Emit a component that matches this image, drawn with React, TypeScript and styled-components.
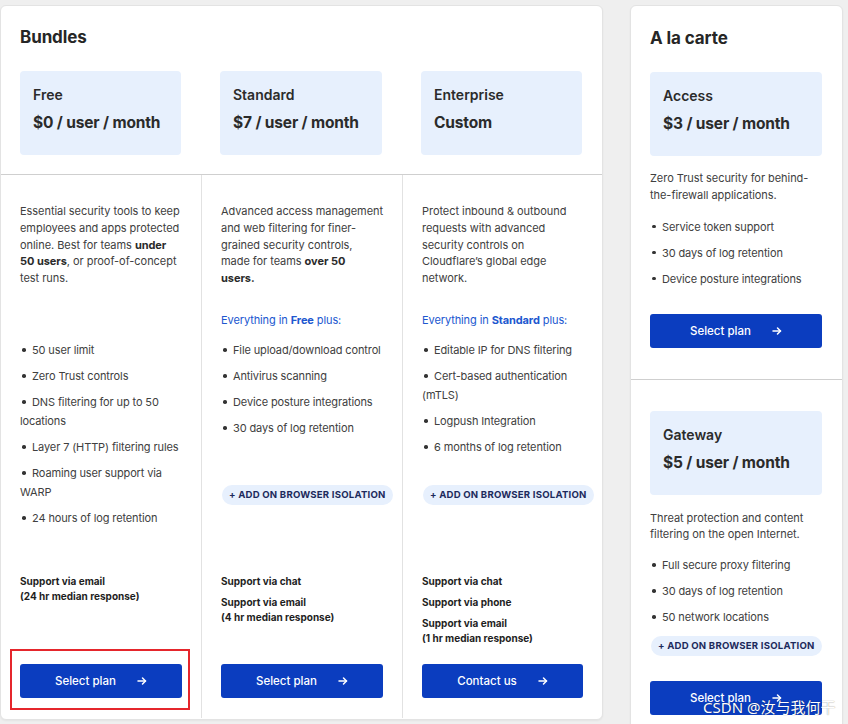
import React from 'react';
import styled, { createGlobalStyle } from 'styled-components';

const Global = createGlobalStyle`
  html, body { margin: 0; padding: 0; background: #efefef; }
  body { font-family: Inter, "Noto Sans", "Liberation Sans", sans-serif; color: #2a2a2a; }
  #root { height: 724px; overflow: hidden; position: relative; }
  * { box-sizing: border-box; }
`;

const Page = styled.div`
  display: flex;
  align-items: flex-start;
  gap: 27px;
  padding-top: 5px;
`;

const Panel = styled.section<{ $w: number; $h?: number }>`
  width: ${(p) => p.$w}px;
  ${(p) => (p.$h ? `height: ${p.$h}px;` : '')}
  background: #fff;
  border: 1px solid #e3e3e3;
  border-radius: 6px;
  box-shadow: 0 1px 2px rgba(0, 0, 0, 0.05);
  display: flex;
  flex-direction: column;
  flex-shrink: 0;
`;

const Header = styled.div`
  padding: 19px 0 19px;
  border-bottom: 1px solid #cfcfcf;
`;

const Title = styled.h2<{ $pad?: number }>`
  margin: 0;
  padding-left: ${(p) => p.$pad ?? 0}px;
  font-size: 17px;
  line-height: 24px;
  font-weight: 700;
  color: #262626;
  letter-spacing: -0.1px;
`;

const Grid = styled.div`
  display: grid;
  grid-template-columns: 200px 201px minmax(0, 1fr);
`;

const CardCell = styled.div`
  padding: 22px 20px 0 19px;
  min-width: 0;
`;

const PlanCard = styled.div`
  background: #e7f0fd;
  border-radius: 4px;
  height: 84px;
  padding: 14px 13px 0;
`;

const PlanName = styled.div`
  font-size: 14px;
  line-height: 20px;
  font-weight: 600;
  color: #2b2b2b;
`;

const PlanPrice = styled.div`
  margin-top: 7px;
  font-size: 15.5px;
  line-height: 22px;
  font-weight: 700;
  color: #2b2b2b;
  letter-spacing: -0.15px;
  white-space: nowrap;
`;

const Column = styled.div<{ $first?: boolean }>`
  display: flex;
  flex-direction: column;
  min-width: 0;
  height: 543px;
  padding: 28px 19px 20px 19px;
  border-left: ${(p) => (p.$first ? 'none' : '1px solid #e2e2e2')};
`;

const Top = styled.div`
  height: 371px;
  flex-shrink: 0;
  display: flex;
  flex-direction: column;
`;

const Desc = styled.p<{ $min?: number; $nowrap?: boolean }>`
  margin: 0;
  min-height: ${(p) => p.$min ?? 0}px;
  font-size: 11px;
  line-height: 16.75px;
  letter-spacing: -0.05px;
  color: #404040;
  white-space: ${(p) => (p.$nowrap ? 'nowrap' : 'normal')};
  b { font-weight: 700; color: #2a2a2a; }
`;

const Everything = styled.div`
  height: 31px;
  padding-top: 2px;
  font-size: 11px;
  line-height: 17px;
  letter-spacing: -0.1px;
  color: #2057cf;
  b { font-weight: 700; }
`;

const List = styled.ul<{ $min?: number }>`
  list-style: none;
  margin: 0;
  padding: 0;
  min-height: ${(p) => p.$min ?? 0}px;
`;

const Item = styled.li`
  font-size: 11px;
  line-height: 19px;
  letter-spacing: -0.12px;
  color: #404040;
  margin-bottom: 7px;
  &:last-child { margin-bottom: 0; }
  &::before {
    content: '';
    display: inline-block;
    width: 3.5px;
    height: 3.5px;
    border-radius: 50%;
    background: #333;
    margin: 0 6.5px 2px 2px;
    vertical-align: middle;
  }
`;

const Pill = styled.div`
  align-self: flex-start;
  margin-left: 1px;
  height: 20px;
  padding: 0 7px;
  border-radius: 10px;
  background: #e7f0fd;
  color: #1c2a5c;
  font-size: 9.6px;
  font-weight: 700;
  letter-spacing: 0.2px;
  line-height: 20px;
  white-space: nowrap;
`;

const Support = styled.div`
  display: flex;
  flex-direction: column;
  gap: 6px;
  font-size: 10px;
  line-height: 15px;
  font-weight: 700;
  color: #1e1e1e;
`;

const ButtonWrap = styled.div<{ $highlight?: boolean }>`
  margin-top: auto;
  position: relative;
  ${(p) =>
    p.$highlight
      ? `&::after {
    content: '';
    position: absolute;
    left: -10px; right: -8px; top: -15px; bottom: -12px;
    border: 2px solid #e5262c;
    pointer-events: none;
  }`
      : ''}
`;

const Button = styled.button<{ $mt?: number }>`
  width: 100%;
  height: 34px;
  margin-top: ${(p) => p.$mt ?? 0}px;
  border: none;
  border-radius: 3px;
  background: #0b3dbf;
  color: #fff;
  font-family: inherit;
  font-size: 11.5px;
  font-weight: 500;
  display: flex;
  align-items: center;
  justify-content: center;
  gap: 21px;
  padding: 0;
  cursor: pointer;
`;

const Side = styled.div<{ $top: number; $bottom: number; $border?: boolean }>`
  padding: ${(p) => p.$top}px 20px ${(p) => p.$bottom}px 19px;
  border-bottom: ${(p) => (p.$border ? '1px solid #cfcfcf' : 'none')};
  display: flex;
  flex-direction: column;
`;

const Gap = styled.div<{ $h: number }>`
  height: ${(p) => p.$h}px;
  flex-shrink: 0;
`;

const Watermark = styled.div`
  position: absolute;
  left: 703px;
  top: 697px;
  font-family: "Noto Sans", "Noto Sans CJK SC", sans-serif;
  font-size: 15px;
  line-height: 20px;
  color: #fff;
  text-shadow: 0 0 1px rgba(0, 0, 0, 0.55);
  white-space: nowrap;
`;

const Arrow = () => (
  <svg width="10" height="10" viewBox="0 0 10 10" fill="none" stroke="#fff" strokeWidth="1.5" strokeLinecap="round" strokeLinejoin="round">
    <path d="M1 5h7.5" />
    <path d="M5.5 2l3 3-3 3" />
  </svg>
);

const Select = ({ label = 'Select plan', mt }: { label?: string; mt?: number }) => (
  <Button $mt={mt}>
    <span>{label}</span>
    <Arrow />
  </Button>
);

type Plan = { name: string; price: string };
const bundles: Plan[] = [
  { name: 'Free', price: '$0 / user / month' },
  { name: 'Standard', price: '$7 / user / month' },
  { name: 'Enterprise', price: 'Custom' },
];

export default function App() {
  return (
    <>
      <Global />
      <Page>
        <Panel $w={603} $h={715}>
          <Header>
            <Title $pad={19}>Bundles</Title>
            <Grid>
              {bundles.map((b) => (
                <CardCell key={b.name}>
                  <PlanCard>
                    <PlanName>{b.name}</PlanName>
                    <PlanPrice>{b.price}</PlanPrice>
                  </PlanCard>
                </CardCell>
              ))}
            </Grid>
          </Header>
          <Grid>
            <Column $first>
              <Top>
                <Desc $min={107} $nowrap>
                  Essential security tools to keep
                  <br />
                  employees and apps protected
                  <br />
                  online. Best for teams <b>under</b>
                  <br />
                  <b>50 users</b>, or proof-of-concept
                  <br />
                  test runs.
                </Desc>
                <Everything />
                <List>
                  <Item>50 user limit</Item>
                  <Item>Zero Trust controls</Item>
                  <Item>DNS filtering for up to 50 locations</Item>
                  <Item>Layer 7 (HTTP) filtering rules</Item>
                  <Item>Roaming user support via WARP</Item>
                  <Item>24 hours of log retention</Item>
                </List>
              </Top>
              <Support>
                <div>
                  Support via email
                  <br />
                  (24 hr median response)
                </div>
              </Support>
              <ButtonWrap $highlight>
                <Select />
              </ButtonWrap>
            </Column>
            <Column>
              <Top>
                <Desc $min={107} $nowrap>
                  Advanced access management
                  <br />
                  and web filtering for finer-
                  <br />
                  grained security controls,
                  <br />
                  made for teams <b>over 50</b>
                  <br />
                  <b>users.</b>
                </Desc>
                <Everything>
                  Everything in <b>Free</b> plus:
                </Everything>
                <List $min={144}>
                  <Item>File upload/download control</Item>
                  <Item>Antivirus scanning</Item>
                  <Item>Device posture integrations</Item>
                  <Item>30 days of log retention</Item>
                </List>
                <Pill>+ ADD ON BROWSER ISOLATION</Pill>
              </Top>
              <Support>
                <div>Support via chat</div>
                <div>
                  Support via email
                  <br />
                  (4 hr median response)
                </div>
              </Support>
              <ButtonWrap>
                <Select />
              </ButtonWrap>
            </Column>
            <Column>
              <Top>
                <Desc $min={107} $nowrap>
                  Protect inbound &amp; outbound
                  <br />
                  requests with advanced
                  <br />
                  security controls on
                  <br />
                  Cloudflare’s global edge
                  <br />
                  network.
                </Desc>
                <Everything>
                  Everything in <b>Standard</b> plus:
                </Everything>
                <List $min={144}>
                  <Item>Editable IP for DNS filtering</Item>
                  <Item>Cert-based authentication (mTLS)</Item>
                  <Item>Logpush Integration</Item>
                  <Item>6 months of log retention</Item>
                </List>
                <Pill>+ ADD ON BROWSER ISOLATION</Pill>
              </Top>
              <Support>
                <div>Support via chat</div>
                <div>Support via phone</div>
                <div>
                  Support via email
                  <br />
                  (1 hr median response)
                </div>
              </Support>
              <ButtonWrap>
                <Select label="Contact us" />
              </ButtonWrap>
            </Column>
          </Grid>
        </Panel>

        <Panel $w={213}>
          <Side $top={20} $bottom={31} $border>
            <Title>A la carte</Title>
            <Gap $h={22} />
            <PlanCard>
              <PlanName>Access</PlanName>
              <PlanPrice>$3 / user / month</PlanPrice>
            </PlanCard>
            <Gap $h={14} />
            <Desc>Zero Trust security for behind-the-firewall applications.</Desc>
            <Gap $h={14} />
            <List>
              <Item>Service token support</Item>
              <Item>30 days of log retention</Item>
              <Item>Device posture integrations</Item>
            </List>
            <Select mt={25} />
          </Side>
          <Side $top={31} $bottom={20}>
            <PlanCard>
              <PlanName>Gateway</PlanName>
              <PlanPrice>$5 / user / month</PlanPrice>
            </PlanCard>
            <Gap $h={15} />
            <Desc>Threat protection and content filtering on the open Internet.</Desc>
            <Gap $h={13} />
            <List>
              <Item>Full secure proxy filtering</Item>
              <Item>30 days of log retention</Item>
              <Item>50 network locations</Item>
            </List>
            <Gap $h={9} />
            <Pill>+ ADD ON BROWSER ISOLATION</Pill>
            <Select mt={25} />
          </Side>
        </Panel>
      </Page>
      <Watermark>CSDN @汝与我何干</Watermark>
    </>
  );
}
